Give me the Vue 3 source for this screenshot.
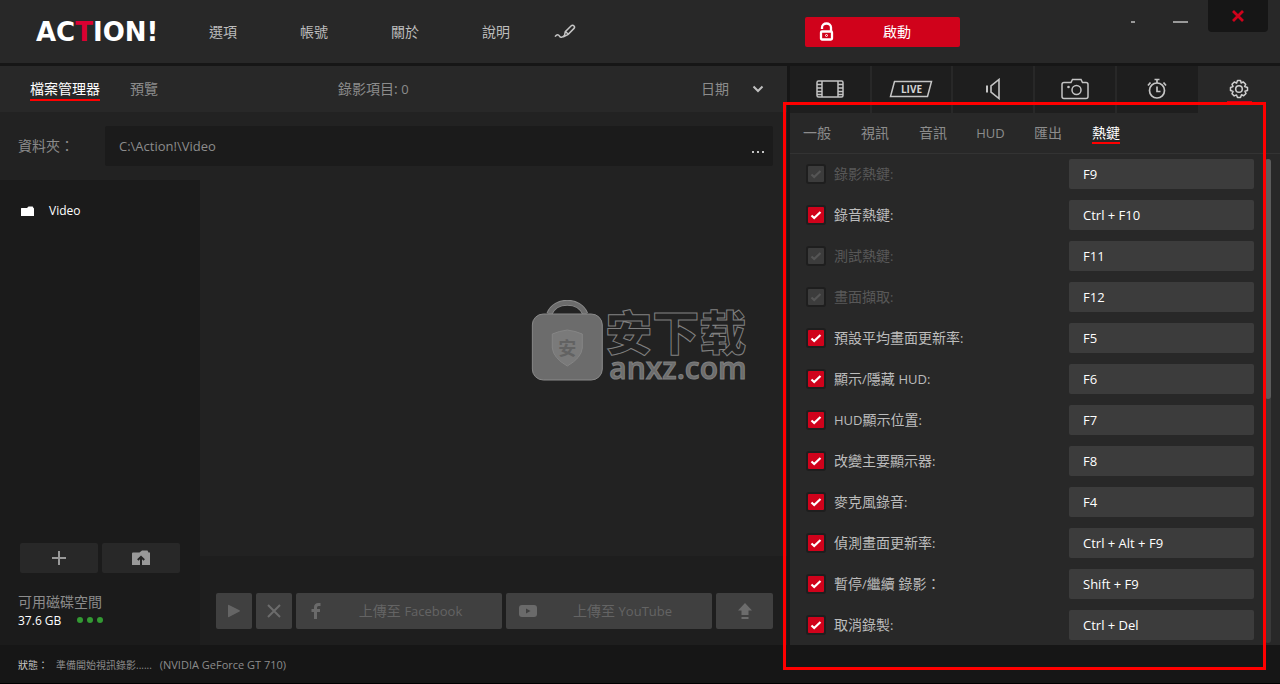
<script setup>
import { ref } from 'vue'

const menu = ['選項', '帳號', '關於', '說明']
const settingsTabs = [
  { latin: false, label: '一般' },
  { latin: false, label: '視訊' },
  { latin: false, label: '音訊' },
  { latin: true, label: 'HUD' },
  { latin: false, label: '匯出' },
  { latin: false, label: '熱鍵', active: true }
]
const sort = ref('date')
const hotkeys = ref([
  { label: '錄影熱鍵:', key: 'F9', on: true, off: true },
  { label: '錄音熱鍵:', key: 'Ctrl + F10', on: true },
  { label: '測試熱鍵:', key: 'F11', on: true, off: true },
  { label: '畫面擷取:', key: 'F12', on: true, off: true },
  { label: '預設平均畫面更新率:', key: 'F5', on: true },
  { label: '顯示/隱藏 HUD:', key: 'F6', on: true },
  { label: 'HUD顯示位置:', key: 'F7', on: true },
  { label: '改變主要顯示器:', key: 'F8', on: true },
  { label: '麥克風錄音:', key: 'F4', on: true },
  { label: '偵測畫面更新率:', key: 'Ctrl + Alt + F9', on: true },
  { label: '暫停/繼續 錄影：', key: 'Shift + F9', on: true },
  { label: '取消錄製:', key: 'Ctrl + Del', on: true }
])
// Splits a label so Latin runs can be set one size below the Chinese text.
const runs = (text) => text.match(/[\x21-\x7e]+|[^\x21-\x7e]+/g).map((t) => ({ t, latin: /[\x21-\x7e]/.test(t) }))
</script>

<template>
  <div class="app">
    <header class="header">
      <div class="header-left">
        <div class="logo">AC<span>T</span>ION!</div>
        <nav class="menu">
          <button v-for="m in menu" :key="m" type="button">{{ m }}</button>
          <button type="button" aria-label="Draw">
            <svg width="22" height="16" viewBox="0 0 22 16" fill="none" stroke="#c4c4c4" stroke-width="1.5">
              <path d="M1 12.6C3 10 4.500 10.500 5.500 12.200C6.500 14 8.500 13.500 10.500 11.500" />
              <path d="M10.300 12.300L11.300 7.600L17 2C18 1 19.200 1 20 1.900C20.800 2.800 20.700 3.700 19.800 4.600L14.200 10.300ZM11.500 7.500L14.300 10.300" />
            </svg>
          </button>
        </nav>
      </div>
      <div class="header-right">
        <button class="start" type="button">
          <svg width="15" height="20" viewBox="0 0 15 20" fill="none" stroke="#fff">
            <path d="M3 7V5.500A4.500 4 0 0 1 12 5.500V9" stroke-width="2.300" />
            <rect x="2" y="9.500" width="11" height="8" rx="1" stroke-width="2.300" />
            <circle cx="7.500" cy="13.500" r="1" stroke-width="1" />
          </svg>
          <span>啟動</span>
        </button>
        <div class="window-controls">
          <button class="dot" type="button" aria-label="Compact"><i></i></button>
          <button class="minimize" type="button" aria-label="Minimize"><i></i></button>
          <button class="close" type="button" aria-label="Close">
            <svg width="12" height="12" viewBox="0 0 12 12" stroke="#d0021b" stroke-width="2.800"><path d="M1 1L11 11M11 1L1 11" /></svg>
          </button>
        </div>
      </div>
    </header>

    <main class="main">
      <section class="files">
        <div class="file-tabs">
          <button class="tab active" type="button">檔案管理器</button>
          <button class="tab" type="button">預覽</button>
          <span class="count">錄影項目: <span class="latin">0</span></span>
          <div class="sort">
            <select v-model="sort" aria-label="Sort">
              <option value="date">日期</option>
            </select>
            <svg width="12" height="8" viewBox="0 0 12 8" fill="none" stroke="#c0c0c0" stroke-width="2"><path d="M1.500 1.500L6 6L10.500 1.500" /></svg>
          </div>
        </div>
        <div class="path-row">
          <label for="folder">資料夾：</label>
          <div class="path">
            <input id="folder" type="text" value="C:\Action!\Video" readonly />
            <button type="button" aria-label="Browse"><i></i><i></i><i></i></button>
          </div>
        </div>
        <div class="workspace">
          <aside class="sidebar">
            <a class="folder" href="#video">
              <svg width="14" height="11" viewBox="0 0 14 11" fill="#fff"><path d="M0 2.500Q0 2 .5 2H6L7.500 .5H11.500Q12.300 .5 12.300 2L13 2.200V10H0Z" /></svg>
              Video
            </a>
            <div class="side-bottom">
              <div class="side-buttons">
                <button type="button" aria-label="Add">
                  <svg width="14" height="14" viewBox="0 0 14 14" stroke="#999" stroke-width="2"><path d="M7 0V14M0 7H14" /></svg>
                </button>
                <button type="button" aria-label="Import">
                  <svg width="18" height="16" viewBox="0 0 18 16"><path d="M0 3.500Q0 2.500 1 2.500H7.500L10 .5H15.500L16.500 2.500H18V15H0Z" fill="#999" /><path d="M9 15V8M5.800 10L9 6.800L12.200 10" fill="none" stroke="#242424" stroke-width="2" /></svg>
                </button>
              </div>
              <div class="disk-title">可用磁碟空間</div>
              <div class="disk">37.6 GB <span class="dots"><i></i><i></i><i></i></span></div>
            </div>
          </aside>
          <div class="content">
            <div class="actions">
              <button class="square" type="button" disabled aria-label="Play">
                <svg width="14" height="14" viewBox="0 0 14 14" fill="#656565"><path d="M1 1.500Q1 .5 2 1L12.500 6.300Q13.500 7 12.500 7.500L2 13Q1 13.500 1 12.500Z" /></svg>
              </button>
              <button class="square" type="button" disabled aria-label="Delete">
                <svg width="14" height="14" viewBox="0 0 14 14" stroke="#6c6c6c" stroke-width="2"><path d="M1 1L13 13M13 1L1 13" /></svg>
              </button>
              <button class="upload" type="button" disabled>
                <svg width="14" height="18" viewBox="0 0 14 18" fill="none" stroke="#6a6a6a" stroke-width="3"><path d="M11.500 2.500H9.500Q6.500 2.500 6.500 5.500V17M2.500 8.500H11" /></svg>
                <span>上傳至 <span class="latin">Facebook</span></span>
              </button>
              <button class="upload" type="button" disabled>
                <svg width="18" height="14" viewBox="0 0 18 14"><rect y="1" width="18" height="12" rx="3" fill="#6a6a6a" /><path d="M7 4.500V9.500L11.500 7Z" fill="#404040" /></svg>
                <span>上傳至 <span class="latin">YouTube</span></span>
              </button>
              <button class="share" type="button" disabled aria-label="Upload">
                <svg width="14" height="17" viewBox="0 0 14 17" fill="#6c6c6c"><path d="M7 0L14 7.500H10.500V12H3.500V7.500H0ZM3.500 14H10.500V16H3.500Z" /></svg>
              </button>
            </div>
          </div>
        </div>
      </section>

      <section class="settings">
        <div class="modes">
          <button type="button" aria-label="Screen">
            <svg width="28" height="18" viewBox="0 0 28 18" fill="none" stroke="#c4c4c4" stroke-width="1.500"><rect x="1" y="1" width="26" height="16" rx="1.500" /><path d="M6 1V17M22 1V17M1 4.500H6M1 8H6M1 11.500H6M1 14.500H6M22 4.500H27M22 8H27M22 11.500H27M22 14.500H27" /></svg>
          </button>
          <button type="button" aria-label="Live">
            <svg width="44" height="18" viewBox="0 0 44 18"><path d="M5.500 1.500H42.500L38.500 16.500H1.500Z" fill="none" stroke="#c4c4c4" stroke-width="1.500" /><text x="22.500" y="13" text-anchor="middle" fill="#d4d4d4" class="live">LIVE</text></svg>
          </button>
          <button type="button" aria-label="Audio">
            <svg width="16" height="22" viewBox="0 0 16 22" fill="none" stroke="#c4c4c4"><path d="M14 1.500V20.500L6 14V8Z" stroke-width="1.600" /><path d="M2 7.500V14.500" stroke-width="2" /></svg>
          </button>
          <button type="button" aria-label="Screenshots">
            <svg width="28" height="22" viewBox="0 0 28 22" fill="none" stroke="#c4c4c4" stroke-width="1.500"><path d="M3 4.500H10L11.500 1.500H20L21.500 4.500H25Q27 4.500 27 6.500V18.500Q27 20.500 25 20.500H3Q1 20.500 1 18.500V6.500Q1 4.500 3 4.500Z" /><circle cx="15.500" cy="12" r="4.500" /><circle cx="7.500" cy="9" r="1.300" fill="#c4c4c4" stroke="none" /></svg>
          </button>
          <button type="button" aria-label="Benchmark">
            <svg width="20" height="22" viewBox="0 0 20 22" fill="none" stroke="#c4c4c4" stroke-width="1.700"><circle cx="10" cy="12.500" r="7.500" /><path d="M10 2V5M7.500 1.500H12.500M10 8.500V13.500H13.500M1 7.500L3.500 4.500M19 7.500L16.500 4.500" /></svg>
          </button>
          <button class="active" type="button" aria-label="Settings">
            <svg width="20" height="20" viewBox="0 0 20 20" fill="none" stroke="#d0d0d0" stroke-width="1.500"><path d="M8.500 1.500H11.500L12.200 4L14.200 2.900L16.700 5.300L15.600 7.500L18.500 8.500V11.500L15.900 12.200L17 14.500L14.700 16.800L12.500 15.800L11.500 18.500H8.500L7.500 15.900L5.200 16.900L3 14.700L4.100 12.400L1.500 11.500V8.500L4.100 7.600L3 5.300L5.300 3L7.600 4.100Z" stroke-linejoin="round" /><circle cx="10" cy="10" r="3.300" /></svg>
          </button>
        </div>
        <nav class="sub-tabs">
          <button v-for="t in settingsTabs" :key="t.label" type="button" :class="['tab', { active: t.active, latin: t.latin }]">{{ t.label }}</button>
        </nav>
        <div class="list">
          <div class="rows">
            <div v-for="(h, i) in hotkeys" :key="i" class="row">
              <label :class="{ off: h.off }">
                <span class="check">
                  <input v-model="h.on" type="checkbox" :disabled="h.off" />
                  <svg v-if="h.on" width="12" height="10" viewBox="0 0 12 10" fill="none" stroke-width="2.200"><path d="M1.500 5.500L4.200 8L10.500 2" /></svg>
                </span>
                <span><span v-for="(r, j) in runs(h.label)" :key="j" :class="{ latin: r.latin }">{{ r.t }}</span></span>
              </label>
              <input class="key" type="text" :value="h.key" :aria-label="h.label" readonly />
            </div>
          </div>
          <div class="scroll"><i></i></div>
        </div>
        <div class="frame"></div>
      </section>
    </main>

    <footer class="footer">
      <span class="state">狀態：</span>
      <span class="message">準備開始視訊錄影......</span>
      <span class="gpu">(NVIDIA GeForce GT 710)</span>
    </footer>

    <div class="watermark">
      <svg width="74" height="82" viewBox="0 0 74 82">
        <path d="M18 14C24 -1 48 -1 54 14" fill="none" stroke="#8a8a8a" stroke-width="6" />
        <path d="M18 14C24 -1 48 -1 54 14" fill="none" stroke="#6c6c6c" stroke-width="4" />
        <rect x="1" y="14" width="70" height="66" rx="11" fill="#6c6c6c" stroke="#8a8a8a" />
        <path d="M36 30Q44 31 51 34V48Q50 58 36 66Q22 58 21 48V34Q28 31 36 30Z" fill="#7a7a7a" stroke="#858585" />
        <text x="36" y="55" text-anchor="middle" fill="#626262" class="seal">安</text>
      </svg>
      <div class="mark-text">
        <div class="mark-name">安下载</div>
        <div class="mark-site">anxz.com</div>
      </div>
    </div>
  </div>
</template>

<style>
body { margin: 0; background: #161616; }
</style>

<style scoped>
.app {
  position: relative;
  display: flex;
  flex-direction: column;
  min-height: 100vh;
  box-sizing: border-box;
  border-bottom: 1px solid #000;
  background: #161616;
  color: #8c8c8c;
  font-family: "Open Sans", "Noto Sans CJK TC", sans-serif;
  font-size: 14px;
  line-height: 20px;
}
button, input, select { font: inherit; color: inherit; border: 0; padding: 0; margin: 0; background: none; outline: 0; }
button { display: flex; align-items: center; justify-content: center; white-space: nowrap; }
input { min-width: 0; box-sizing: border-box; }
svg { display: block; flex: none; }
.latin { font-size: 13px; }

.header { display: flex; height: 63px; background: #282828; border-bottom: 3px solid #161616; }
.header-left { flex: 1; display: flex; align-items: center; }
.logo { width: 173px; padding-left: 36px; font: bold 26px/32px "DejaVu Sans", sans-serif; color: #fff; }
.logo span { color: #dc0032; }
.menu { display: flex; align-items: center; gap: 63px; color: #bcbcbc; }
.menu button:last-child { margin-left: -19px; }
.header-right { flex: 0 0 490px; display: flex; justify-content: space-between; }
.start { width: 155px; height: 30px; margin: 17px 0 0 15px; border-radius: 2px; background: #d0021b; color: #fff; }
.start svg { margin-left: 14px; }
.start span { flex: 1; }
.window-controls { display: flex; margin-right: 12px; }
.window-controls button { height: 44px; }
.dot { width: 40px; }
.dot i { width: 4px; height: 2px; background: #999; }
.minimize { width: 55px; }
.minimize i { width: 15px; height: 2px; background: #999; }
.window-controls .close { width: 60px; height: 32px; border-radius: 0 0 4px 4px; background: #161616; }

.main { flex: 1; display: flex; gap: 3px; }
.files { flex: 1; min-width: 0; display: flex; flex-direction: column; background: #222; }
.file-tabs { display: flex; align-items: center; gap: 30px; height: 46px; padding: 0 23px 0 30px; background: #282828; }
.tab { position: relative; }
.tab.active { color: #fff; }
.tab.active::after { content: ""; position: absolute; left: 0; right: 0; bottom: -2px; height: 2px; background: #f00; }
.count { margin-left: 150px; }
.sort { display: flex; align-items: center; gap: 23px; margin-left: auto; }
.sort select { appearance: none; }
.path-row { display: flex; align-items: center; height: 68px; padding-right: 14px; }
.path-row label { width: 87px; padding-left: 18px; }
.path { flex: 1; display: flex; height: 40px; border-radius: 2px; background: #1b1b1b; }
.path input { flex: 1; padding-left: 14px; font-size: 13px; }
.path button { width: 30px; gap: 3px; padding-top: 11px; }
.path button i { width: 2px; height: 2px; background: #c4c4c4; }
.workspace { flex: 1; display: flex; }
.sidebar { flex: 0 0 200px; display: flex; flex-direction: column; justify-content: space-between; background: #1b1b1b; }
.folder { display: flex; align-items: center; gap: 14px; padding: 21px 0 0 21px; font-size: 12px; color: #fff; text-decoration: none; }
.side-bottom { padding: 0 20px 14px 18px; }
.side-buttons { display: flex; gap: 4px; padding-left: 2px; margin-bottom: 20px; }
.side-buttons button { flex: 1; height: 30px; border-radius: 2px; background: #282828; }
.disk-title { line-height: 18px; }
.disk { display: flex; align-items: center; gap: 16px; font-size: 12px; line-height: 20px; color: #fff; }
.dots { display: flex; gap: 4px; padding-bottom: 3px; }
.dots i { width: 6px; height: 6px; border-radius: 50%; background: #339933; }
.content { flex: 1; display: flex; flex-direction: column; justify-content: flex-end; }
.actions { display: flex; gap: 4px; padding: 37px 14px 16px 16px; background: #1e1e1e; }
.actions button { height: 36px; border-radius: 2px; background: #404040; color: #646464; }
.actions .square { width: 36px; }
.actions .share { width: 57px; }
.actions .upload { flex: 1; }
.upload svg { margin-left: 13px; }
.upload > span { flex: 1; padding-right: 4px; }

.settings { position: relative; flex: 0 0 490px; display: flex; flex-direction: column; background: #282828; }
.modes { display: grid; grid-template-columns: repeat(6, 1fr); height: 47px; }
.modes button { background: #1e1e1e; border-right: 2px solid #282828; padding-bottom: 1px; }
.modes button:nth-child(5) { border-right: 0; }
.modes .active { position: relative; background: #282828; border-right: 0; }
.modes .active::after { content: ""; position: absolute; bottom: 10px; width: 25px; height: 2px; background: #d0021b; }
.live { font: bold 10px "Open Sans", sans-serif; }
.sub-tabs { display: flex; align-items: center; gap: 30px; height: 40px; padding-left: 13px; border-bottom: 1px solid #333; line-height: 18px; }
.sub-tabs .latin { width: 27px; }
.list { flex: 1; display: flex; justify-content: space-between; padding: 5px 9px 1px 16px; }
.rows { flex: 1; }
.row { display: flex; justify-content: space-between; align-items: center; height: 30px; margin-bottom: 11px; }
.row:last-child { margin-bottom: 4px; }
.row label { display: flex; align-items: center; gap: 8px; color: #bcbcbc; white-space: pre; }
.row label.off { color: #585858; }
.check { display: grid; place-items: center; }
.check input { grid-area: 1 / 1; appearance: none; width: 20px; height: 20px; border: 2px solid #1e1e1e; border-radius: 3px; background: #3c3c3c; }
.check input:checked { background: #d0021b; }
.check input:disabled { background: #3c3c3c; }
.check svg { grid-area: 1 / 1; stroke: #fff; pointer-events: none; }
.off .check svg { stroke: #555; }
.key { width: 185px; height: 30px; padding-left: 14px; border-radius: 2px; background: #3c3c3c; color: #fff; font-size: 13px; }
.scroll { width: 6px; margin: 0 0 1px 11px; border-radius: 3px; background: #3a3a3a; }
.scroll i { display: block; height: 240px; border-radius: 3px; background: #5c5c5c; }
.frame { position: absolute; top: 36px; right: 14px; bottom: -25px; left: -7px; border: 3px solid #f00; pointer-events: none; }

.footer { display: flex; align-items: center; height: 36px; padding: 2px 0 0 18px; font-size: 10px; }
.state { width: 38px; color: #c8c8c8; }
.gpu { margin-left: 8px; font-size: 11px; }

.watermark { position: absolute; top: 50%; left: 50%; display: flex; align-items: center; padding: 0 2px 2px 0; transform: translate(-50%, -50%); pointer-events: none; }
.seal { font: bold 18px "Noto Sans CJK SC", sans-serif; }
.mark-text { padding-top: 4px; }
.mark-name { font: 900 47px/50px "Noto Sans CJK SC", sans-serif; color: #222; -webkit-text-stroke: 1px #808080; }
.mark-site { padding-left: 4px; font: 600 30px/26px "Open Sans", sans-serif; color: #6c6c6c; -webkit-text-stroke: 1px #808080; }
</style>
